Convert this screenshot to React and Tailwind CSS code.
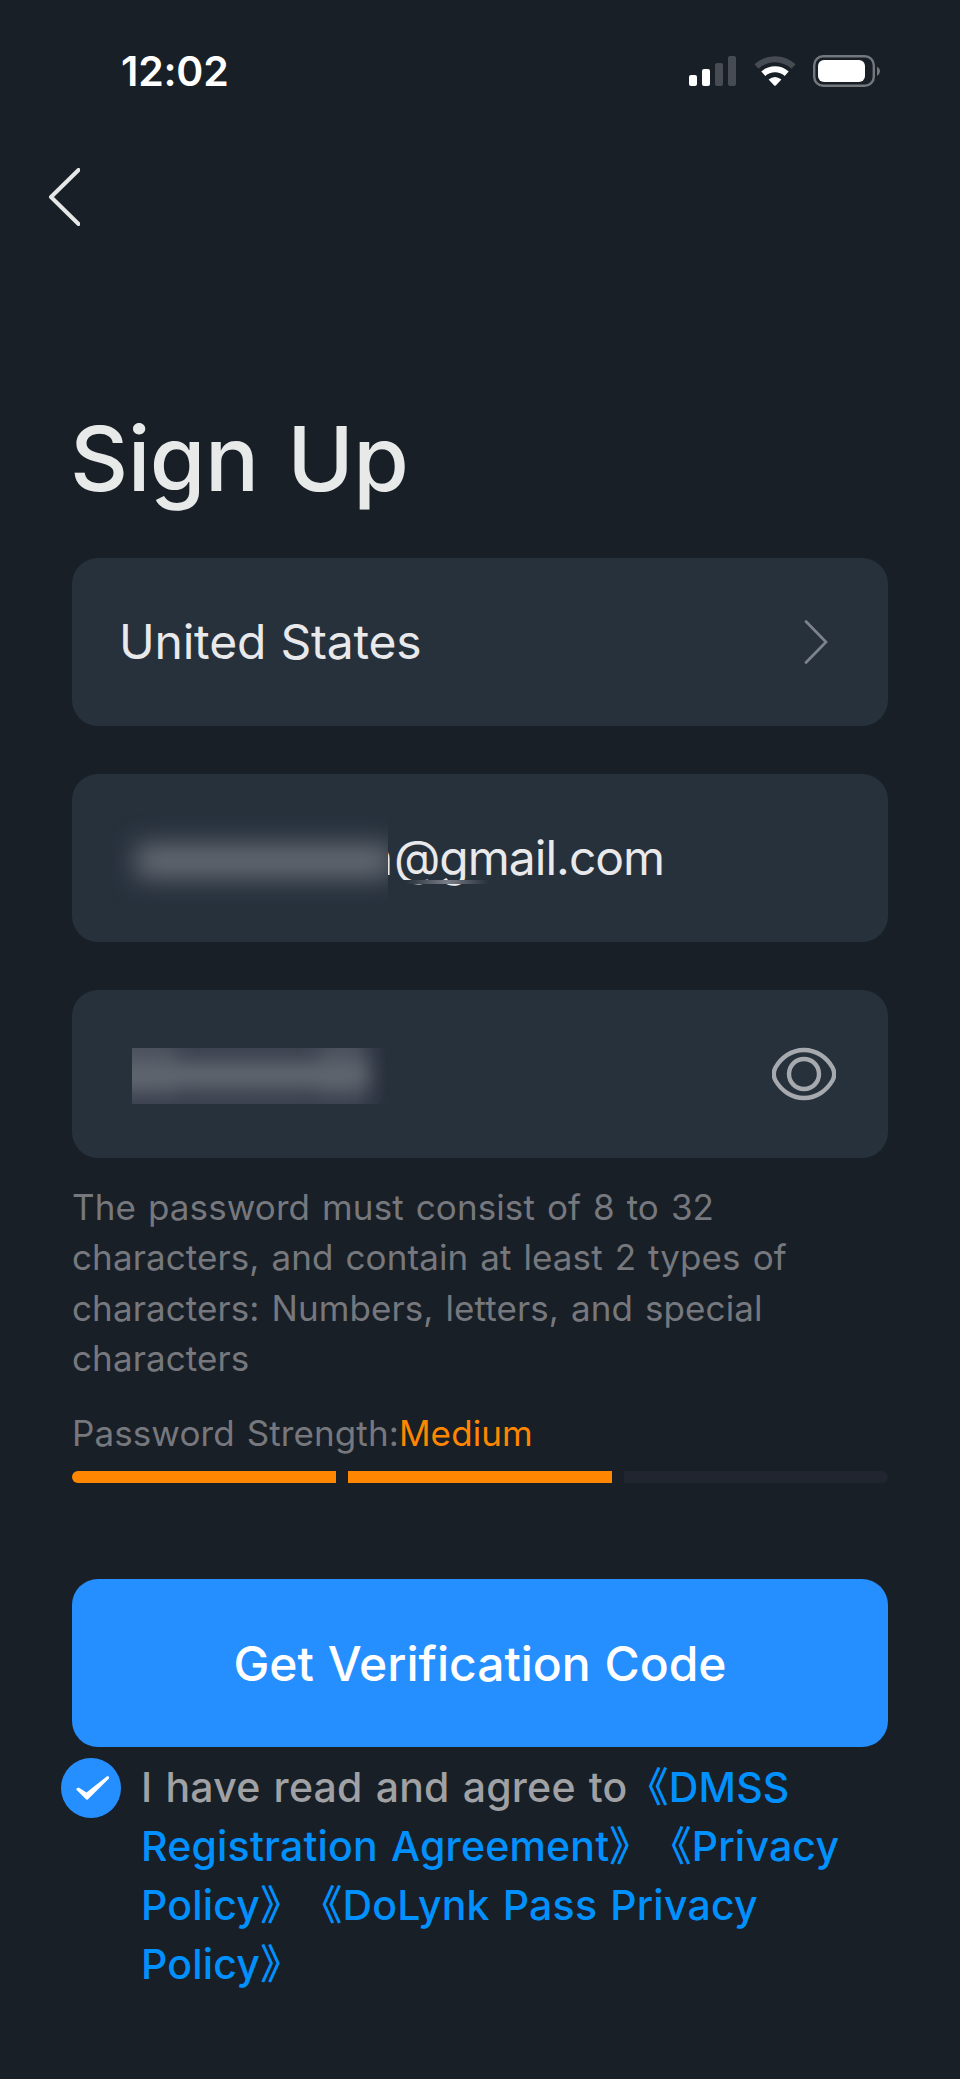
const fieldClass = "relative flex h-[168px] items-center rounded-[26px] bg-[#27313c] px-12";

const hintClass = "text-[35px] leading-[50.3px] tracking-[0.1px] [word-spacing:2px] text-[#76787e]";

function StatusIcons() {
  return (
    <svg width="192" height="34" viewBox="688 54 192 34" fill="none" aria-hidden>
      {/* Signal */}
      <rect x="689" y="75" width="8" height="11" rx="2" fill="#fff" />
      <rect x="702" y="69" width="8" height="17" rx="2" fill="#fff" />
      <rect x="715" y="63" width="8" height="23" rx="2" fill="#474b52" />
      <rect x="728" y="56" width="8" height="30" rx="2" fill="#474b52" />
      {/* Wifi */}
      <path d="M756.5 66.5A27 27 0 0 1 793.5 66.5" stroke="#474b52" strokeWidth="6" />
      <path d="M763.3 73.8A17.5 17.5 0 0 1 786.7 73.8" stroke="#fff" strokeWidth="6" />
      <path d="M768.6 79.6Q775 74.6 781.4 79.6L775.8 85.4Q775 86.2 774.2 85.4Z" fill="#fff" />
      {/* Battery */}
      <rect x="814.2" y="56.2" width="59.6" height="29.6" rx="9" stroke="#74777c" strokeWidth="2.4" />
      <rect x="818" y="60" width="47" height="22" rx="6" fill="#fff" />
      <path d="M877 66.5Q880 68.5 880 71.2T877 76Z" fill="#74777c" />
    </svg>
  );
}

function BackIcon() {
  return (
    <svg width="32" height="58" viewBox="0 0 32 58" fill="none" aria-hidden>
      <path
        d="M30.5 2L3 29L30.5 56"
        stroke="#e6e8e7"
        strokeWidth="4"
        strokeLinecap="round"
        strokeLinejoin="round"
      />
    </svg>
  );
}

function ChevronIcon() {
  return (
    <svg className="mr-3" width="24" height="44" viewBox="0 0 24 44" fill="none" aria-hidden>
      <path d="M2 1.5L22 22L2 42.5" stroke="#7d838b" strokeWidth="2.7" strokeLinecap="round" />
    </svg>
  );
}

function EyeIcon() {
  return (
    <svg className="mr-1" width="64" height="54" viewBox="0 0 64 54" fill="none" aria-hidden>
      <path
        d="M32 3C45 3 55 11 60.5 20.5Q64 27 60.5 33.5C55 43 45 51 32 51S9 43 3.5 33.5Q0 27 3.5 20.5C9 11 19 3 32 3Z"
        stroke="#a6a9ae"
        strokeWidth="4.4"
      />
      <circle cx="32" cy="27" r="15" stroke="#a6a9ae" strokeWidth="4.4" />
    </svg>
  );
}

function CheckIcon() {
  return (
    <svg width="60" height="60" viewBox="0 0 60 60" aria-hidden>
      <circle cx="30" cy="30" r="30" fill="#268fff" />
      <path
        d="M15.2 31.5Q15.5 29.2 18 29.8L25.5 34.4L46 18.3Q48.6 17.6 48 20.4L27 41.2Q26 42.2 25 41.3Z"
        fill="#fff"
      />
    </svg>
  );
}

function EmailField() {
  return (
    <div className={fieldClass}>
      {/* Masked part of the address */}
      <div className="-ml-2 h-[90px] w-[276px] overflow-hidden">
        <div className="mt-[31px] ml-6 h-[34px] w-[256px] bg-[#646a73] blur-[13px]" />
      </div>
      <div className="flex w-[5px] justify-end overflow-hidden text-[48px] text-[#e9e9eb]">n</div>
      <span className="ml-px text-[48px] tracking-[-1px] text-[#e9e9eb]">@gmail.com</span>
      <div className="absolute top-[106px] left-[318px] h-1 w-[104px] bg-linear-to-r from-[#27313c] from-15% via-[#7b7f87] via-55% to-[#27313c] to-95%" />
    </div>
  );
}

function PasswordField() {
  return (
    <div className={`${fieldClass} justify-between`}>
      <div className="relative mt-1 ml-3 h-14 w-64 overflow-hidden bg-linear-to-r from-[#3b414e] from-88% to-[#27313c]">
        <div className="absolute top-[15px] -left-5 h-6 w-[254px] bg-[#646b73] blur-[10px]" />
        <div className="absolute -top-3 -left-4 h-14 w-[60px] bg-[#5f666f]/50 blur-[10px]" />
        <div className="absolute -top-3 left-[188px] h-14 w-11 bg-[#5f666f]/50 blur-[10px]" />
      </div>
      <EyeIcon />
    </div>
  );
}

function App() {
  return (
    <div className="min-h-[2079px] bg-[#181f26] font-['Inter','Noto_Sans_CJK_SC',sans-serif]">
      <header>
        <div className="flex h-[142px] items-center justify-between pr-20 pl-[121px]">
          <span className="mt-0.5 text-[41px] font-semibold tracking-[-0.2px] text-white">12:02</span>
          <StatusIcons />
        </div>
        <button type="button" aria-label="Back" className="mt-[26px] ml-12 block">
          <BackIcon />
        </button>
      </header>

      <main className="px-[72px] pt-[188px]">
        <h1 className="-ml-0.5 text-[90px] leading-[90px] font-medium tracking-[-0.5px] [word-spacing:5px] text-[#e8eaea]">
          Sign Up
        </h1>

        <div className="mt-[54px] flex flex-col gap-12">
          <div className={`${fieldClass} justify-between`}>
            <span className="-ml-px text-[48px] tracking-[-0.2px] [word-spacing:1px] text-[#e9e9eb]">
              United States
            </span>
            <ChevronIcon />
          </div>
          <EmailField />
          <PasswordField />
        </div>

        <p className={`${hintClass} mt-6 w-[740px]`}>
          The password must consist of 8 to 32 characters, and contain at least 2 types of
          characters: Numbers, letters, and special characters
        </p>

        <p className={`${hintClass} mt-[25px]`}>
          Password Strength:<span className="text-[#ff8600]">Medium</span>
        </p>
        <div className="mt-[13px] grid grid-cols-3 gap-3">
          <div className="h-3 rounded-l-full bg-[#ff8600]" />
          <div className="h-3 bg-[#ff8600]" />
          <div className="h-3 rounded-r-full bg-[#20252f]" />
        </div>

        <button
          type="button"
          className="mt-24 h-[168px] w-full rounded-[26px] bg-[#268fff] pt-0.5 text-[48px] font-medium [word-spacing:1px] text-white"
        >
          Get Verification Code
        </button>

        <div className="mt-[11px] -ml-[11px] flex items-start gap-5">
          <CheckIcon />
          <p className="w-[720px] text-[41px] leading-[58.7px] font-medium tracking-[0.2px] [word-spacing:2px] text-[#0091ff] [text-spacing-trim:space-all]">
            <span className="text-[#a0a1a4]">I have read and agree to</span>
            《DMSS Registration Agreement》《Privacy Policy》《DoLynk Pass Privacy Policy》
          </p>
        </div>
      </main>
    </div>
  );
}

export default App;
